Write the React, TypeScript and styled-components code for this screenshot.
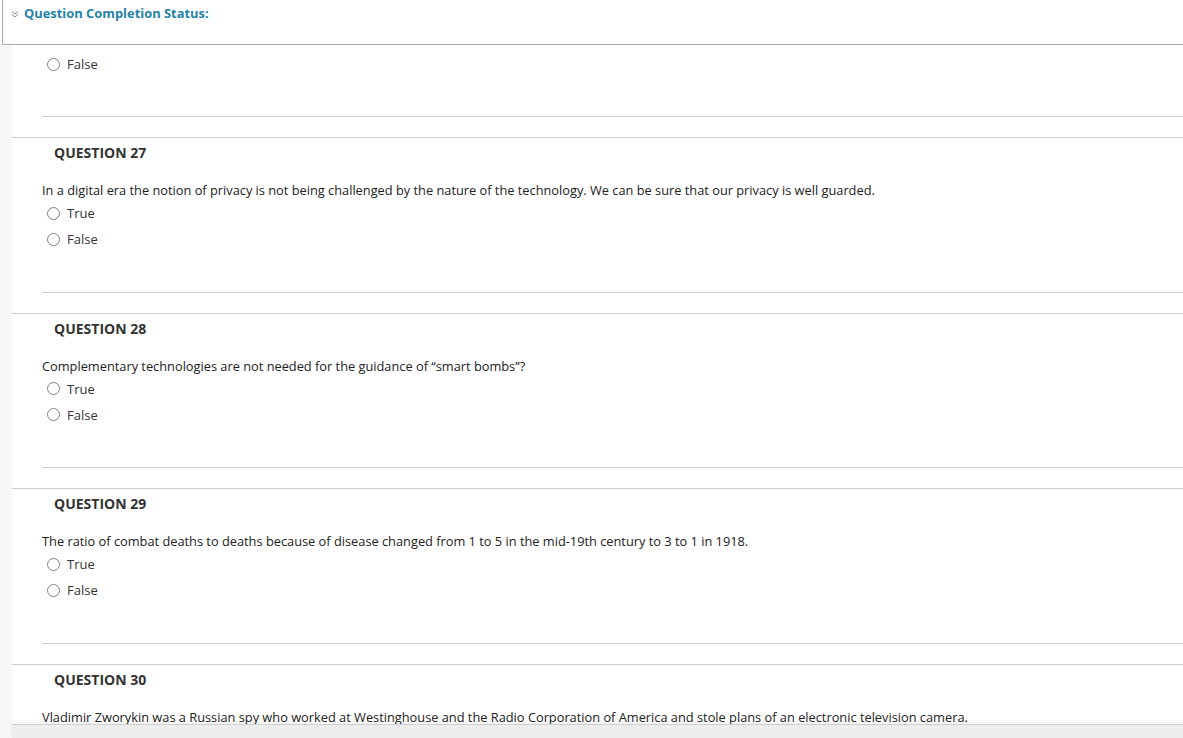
import React from "react";
import styled, { createGlobalStyle } from "styled-components";

const Global = createGlobalStyle`
  html, body { margin: 0; padding: 0; background: #ffffff; }
  body { font-family: "Open Sans", "Liberation Sans", sans-serif; color: #333; overflow: hidden; }
  * { box-sizing: border-box; }
`;

const Page = styled.div`
  width: 1183px;
  height: 738px;
  overflow: hidden;
  display: flex;
  flex-direction: column;
`;

const Header = styled.div`
  height: 45px;
  margin-left: 2px;
  border-left: 1px solid #a9a9a9;
  border-bottom: 1px solid #a9a9a9;
  padding: 4px 0 0 8px;
  display: flex;
  align-items: flex-start;
  gap: 5px;
  flex-shrink: 0;
`;

const HeaderTitle = styled.div`
  font-size: 12.9px;
  font-weight: 700;
  line-height: 18px;
  color: #2683a6;
`;

const Chevron = styled.svg`
  width: 8px;
  height: 8px;
  margin-top: 6px;
`;

const Body = styled.div`
  flex: 1;
  display: flex;
  background: #f7f7f7;
  padding-left: 12px;
`;

const Content = styled.div`
  flex: 1;
  background: #ffffff;
  display: flex;
  flex-direction: column;
`;

const Block = styled.div<{ $top?: boolean }>`
  border-top: ${(p) => (p.$top ? "none" : "1px solid #cfcfcf")};
  padding-top: ${(p) => (p.$top ? "6px" : "5px")};
  padding-bottom: 20px;
`;

const Heading = styled.div`
  margin-left: 42px;
  font-size: 14px;
  font-weight: 700;
  line-height: 20px;
  color: #333;
  text-transform: uppercase;
`;

const Prompt = styled.div`
  margin: 17px 0 0 30px;
  font-size: 12.8px;
  line-height: 20px;
  color: #222;
`;

const Options = styled.div`
  margin-left: 35px;
  display: flex;
  flex-direction: column;
`;

const Option = styled.label`
  height: 26px;
  display: flex;
  align-items: center;
  gap: 7px;
  font-size: 13px;
  color: #333;
`;

const Radio = styled.span`
  width: 13px;
  height: 13px;
  border: 1px solid #808080;
  border-radius: 50%;
  background: #fff;
  flex-shrink: 0;
`;

const Divider = styled.div<{ $gap?: number }>`
  margin: ${(p) => p.$gap ?? 39.5}px 0 0 30px;
  border-top: 1px solid #d2d2d2;
`;

const BottomBar = styled.div`
  position: fixed;
  left: 12px;
  right: 0;
  bottom: 0;
  height: 14px;
  background: #eeeeee;
  border-top: 1px solid #cfcfcf;
  box-shadow: 0 -2px 4px rgba(0, 0, 0, 0.06);
`;

type Q = { n: number; text: string };

const questions: Q[] = [
  {
    n: 27,
    text: "In a digital era the notion of privacy is not being challenged by the nature of the technology. We can be sure that our privacy is well guarded.",
  },
  {
    n: 28,
    text: "Complementary technologies are not needed for the guidance of \u201csmart bombs\u201d?",
  },
  {
    n: 29,
    text: "The ratio of combat deaths to deaths because of disease changed from 1 to 5 in the mid-19th century to 3 to 1 in 1918.",
  },
  {
    n: 30,
    text: "Vladimir Zworykin was a Russian spy who worked at Westinghouse and the Radio Corporation of America and stole plans of an electronic television camera.",
  },
];

const Opt = ({ label }: { label: string }) => (
  <Option>
    <Radio />
    {label}
  </Option>
);

export default function App() {
  return (
    <Page>
      <Global />
      <Header>
        <Chevron viewBox="0 0 8 8" fill="none" stroke="#8a8a8a" strokeWidth="1">
          <path d="M1 1.5 L4 4 L7 1.5" />
          <path d="M1 4.5 L4 7 L7 4.5" />
        </Chevron>
        <HeaderTitle>Question Completion Status:</HeaderTitle>
      </Header>
      <Body>
        <Content>
          <Block $top>
            <Options>
              <Opt label="False" />
            </Options>
            <Divider $gap={39} />
          </Block>
          {questions.map((q) => (
            <Block key={q.n}>
              <Heading>Question {q.n}</Heading>
              <Prompt>{q.text}</Prompt>
              <Options>
                <Opt label="True" />
                <Opt label="False" />
              </Options>
              <Divider />
            </Block>
          ))}
        </Content>
      </Body>
      <BottomBar />
    </Page>
  );
}
